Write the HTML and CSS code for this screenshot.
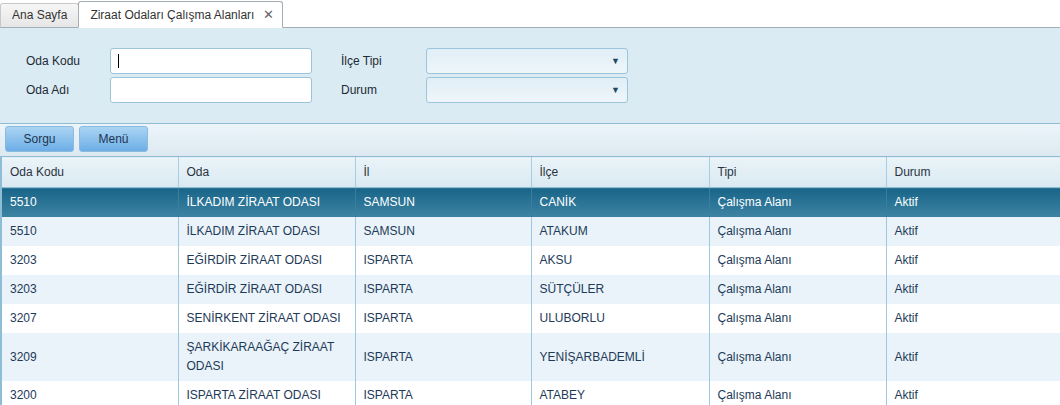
FILE: index.html
```html
<!DOCTYPE html>
<html lang="tr">
<head>
<meta charset="utf-8">
<title>Ziraat Odaları Çalışma Alanları</title>
<link rel="stylesheet" href="styles.css">
</head>
<body>
<div class="tabbar">
  <div class="tab">Ana Sayfa</div>
  <div class="tab active">Ziraat Odaları Çalışma Alanları <span class="close">✕</span></div>
  <div class="tab-fill"></div>
</div>
<div class="form">
  <label class="lbl">Oda Kodu</label>
  <div class="field"><input class="inp" type="text"><span class="caret"></span></div>
  <label class="lbl lbl2">İlçe Tipi</label>
  <div class="sel"><span class="arrow">▼</span></div>
  <label class="lbl">Oda Adı</label>
  <div class="field"><input class="inp" type="text"></div>
  <label class="lbl lbl2">Durum</label>
  <div class="sel"><span class="arrow">▼</span></div>
</div>
<div class="toolbar">
  <button class="btn">Sorgu</button>
  <button class="btn">Menü</button>
</div>
<table class="grid">
  <colgroup>
    <col class="c1"><col class="c2"><col class="c3"><col class="c4"><col class="c5"><col class="c6">
  </colgroup>
  <thead>
    <tr><th>Oda Kodu</th><th>Oda</th><th>İl</th><th>İlçe</th><th>Tipi</th><th>Durum</th></tr>
  </thead>
  <tbody>
    <tr class="selected"><td>5510</td><td>İLKADIM ZİRAAT ODASI</td><td>SAMSUN</td><td>CANİK</td><td>Çalışma Alanı</td><td>Aktif</td></tr>
    <tr class="alt"><td>5510</td><td>İLKADIM ZİRAAT ODASI</td><td>SAMSUN</td><td>ATAKUM</td><td>Çalışma Alanı</td><td>Aktif</td></tr>
    <tr><td>3203</td><td>EĞİRDİR ZİRAAT ODASI</td><td>ISPARTA</td><td>AKSU</td><td>Çalışma Alanı</td><td>Aktif</td></tr>
    <tr class="alt"><td>3203</td><td>EĞİRDİR ZİRAAT ODASI</td><td>ISPARTA</td><td>SÜTÇÜLER</td><td>Çalışma Alanı</td><td>Aktif</td></tr>
    <tr><td>3207</td><td>SENİRKENT ZİRAAT ODASI</td><td>ISPARTA</td><td>ULUBORLU</td><td>Çalışma Alanı</td><td>Aktif</td></tr>
    <tr class="alt"><td>3209</td><td>ŞARKİKARAAĞAÇ ZİRAAT ODASI</td><td>ISPARTA</td><td>YENİŞARBADEMLİ</td><td>Çalışma Alanı</td><td>Aktif</td></tr>
    <tr><td>3200</td><td>ISPARTA ZİRAAT ODASI</td><td>ISPARTA</td><td>ATABEY</td><td>Çalışma Alanı</td><td>Aktif</td></tr>
  </tbody>
</table>
</body>
</html>
```
FILE: styles.css
```css
* { box-sizing: border-box; }
html, body { margin: 0; padding: 0; }
body {
  width: 1060px;
  height: 405px;
  overflow: hidden;
  font-family: "Liberation Sans", Arial, sans-serif;
  font-size: 12px;
  color: #222;
  background: #fff;
}

/* tabs */
.tabbar {
  display: flex;
  align-items: flex-end;
  height: 28px;
  background: #fff;
}
.tab {
  height: 25px;
  padding: 0 11px;
  line-height: 23px;
  color: #333;
  background: linear-gradient(#f6f6f6, #e6e6e6);
  border: 1px solid #c8c8c8;
  border-bottom: 1px solid #a4acb4;
  border-radius: 3px 3px 0 0;
  white-space: nowrap;
}
.tab.active {
  height: 27px;
  line-height: 25px;
  padding: 0 8px 0 11px;
  background: #fff;
  border: 1px solid #a4acb4;
  border-bottom: 1px solid #fff;
  margin-left: -1px;
}
.close {
  display: inline-block;
  margin-left: 5px;
  font-size: 13px;
  color: #666;
}
.tab-fill {
  flex: 1;
  border-bottom: 1px solid #a4acb4;
}

/* form */
.form {
  height: 95px;
  background: #daebf4;
  padding: 20px 0 0 26px;
  display: grid;
  grid-template-columns: 84px 202px 114px 202px;
  grid-template-rows: 26px 26px;
  row-gap: 3px;
  align-items: center;
}
.lbl { color: #1e2a33; }
.lbl2 { padding-left: 29px; }
.field { position: relative; height: 26px; }
.inp {
  width: 202px;
  height: 26px;
  border: 1px solid #9cc4da;
  border-radius: 3px;
  background: #fff;
  padding: 0 6px;
  font: inherit;
  outline: none;
}
.caret {
  position: absolute;
  left: 8px;
  top: 6px;
  width: 1px;
  height: 14px;
  background: #000;
}
.sel {
  height: 26px;
  border: 1px solid #9cc4da;
  border-radius: 3px;
  background: linear-gradient(#e0eef6, #eef6fa);
  display: flex;
  justify-content: flex-end;
  align-items: center;
  padding-right: 7px;
}
.arrow {
  font-size: 9px;
  color: #1f4a62;
}

/* toolbar */
.toolbar {
  height: 33px;
  border-top: 1px solid #8fbcd3;
  background: linear-gradient(#ebf5fa, #dde9f1);
  display: flex;
  gap: 5px;
  padding: 2px 5px 0;
}
.btn {
  width: 69px;
  height: 26px;
  border: 1px solid #8bbadf;
  border-radius: 3px;
  background: linear-gradient(#abd4f3, #6caee6);
  font: inherit;
  color: #1d3550;
  padding: 0;
}

/* grid */
.grid {
  width: 1060px;
  border-collapse: collapse;
  table-layout: fixed;
  border-left: 2px solid #8ebed6;
}
.c1 { width: 177px; }
.c2 { width: 177px; }
.c3 { width: 176px; }
.c4 { width: 178px; }
.c5 { width: 177px; }
.c6 { width: 175px; }
.grid th {
  height: 31px;
  text-align: left;
  font-weight: normal;
  color: #2b3340;
  padding: 0 8px;
  background: linear-gradient(#eaf4f9, #dae9f1);
  border-top: 1px solid #8fbcd3;
  border-bottom: 1px solid #8fbcd3;
  border-left: 1px solid #a6cde0;
}
.grid th:first-child { border-left: none; }
.grid td {
  height: 29px;
  padding: 5px 8px;
  line-height: 19px;
  color: #1e3a58;
  border-left: 1px solid #9ec8dd;
  background: #fff;
}
.grid td:first-child { border-left: none; }
.grid tr.alt td { background: #e9f3f9; }
.grid tr.selected td {
  color: #fff;
  background: linear-gradient(#186588, #3e83a4);
  border-left-color: #3b7d9c;
}
```
